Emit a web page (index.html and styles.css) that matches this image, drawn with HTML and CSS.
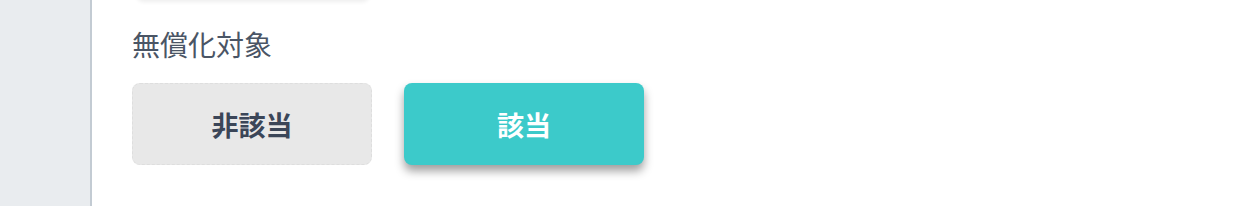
FILE: index.html
```html
<!DOCTYPE html>
<html lang="ja">
<head>
    <meta charset="UTF-8">
    <title>無償化対象</title>
    <link rel="stylesheet" href="styles.css">
</head>
<body>
    <div class="layout">
        <div class="sidebar"></div>
        <div class="main">
            <div class="prev-card"></div>
            <div class="field">
                <div class="label">無償化対象</div>
                <div class="choices">
                    <button class="choice">非該当</button>
                    <button class="choice active">該当</button>
                </div>
            </div>
        </div>
    </div>
</body>
</html>
```

FILE: styles.css
```css
html, body {
    margin: 0;
    height: 100%;
    background: #ffffff;
    font-family: "Noto Sans CJK JP", "Noto Sans", sans-serif;
}
.layout {
    display: flex;
    height: 206px;
}
.sidebar {
    width: 90px;
    background-color: #e9ecef;
    border-right: 2px solid #c3cbd3;
}
.main {
    flex: 1;
    padding: 0 40px;
}
.prev-card {
    width: 234px;
    height: 20px;
    margin: -20px 0 0 4px;
    border-radius: 8px;
    background: #ffffff;
    box-shadow: 0 2px 4px rgba(0, 0, 0, 0.07);
}
.field {
    padding-top: 24px;
}
.label {
    font-size: 28px;
    line-height: 40px;
    color: #4a5565;
}
.choices {
    display: flex;
    gap: 32px;
    margin-top: 19px;
}
.choice {
    box-sizing: border-box;
    width: 240px;
    height: 82px;
    border: 1px dashed #dedede;
    border-radius: 8px;
    background-color: #e8e8e8;
    color: #3b4658;
    font-family: inherit;
    font-size: 27px;
    font-weight: bold;
    cursor: pointer;
}
.choice.active {
    border: none;
    background-color: #3ccaca;
    color: #ffffff;
    box-shadow: 0 6px 10px rgba(0, 0, 0, 0.38);
}
```
